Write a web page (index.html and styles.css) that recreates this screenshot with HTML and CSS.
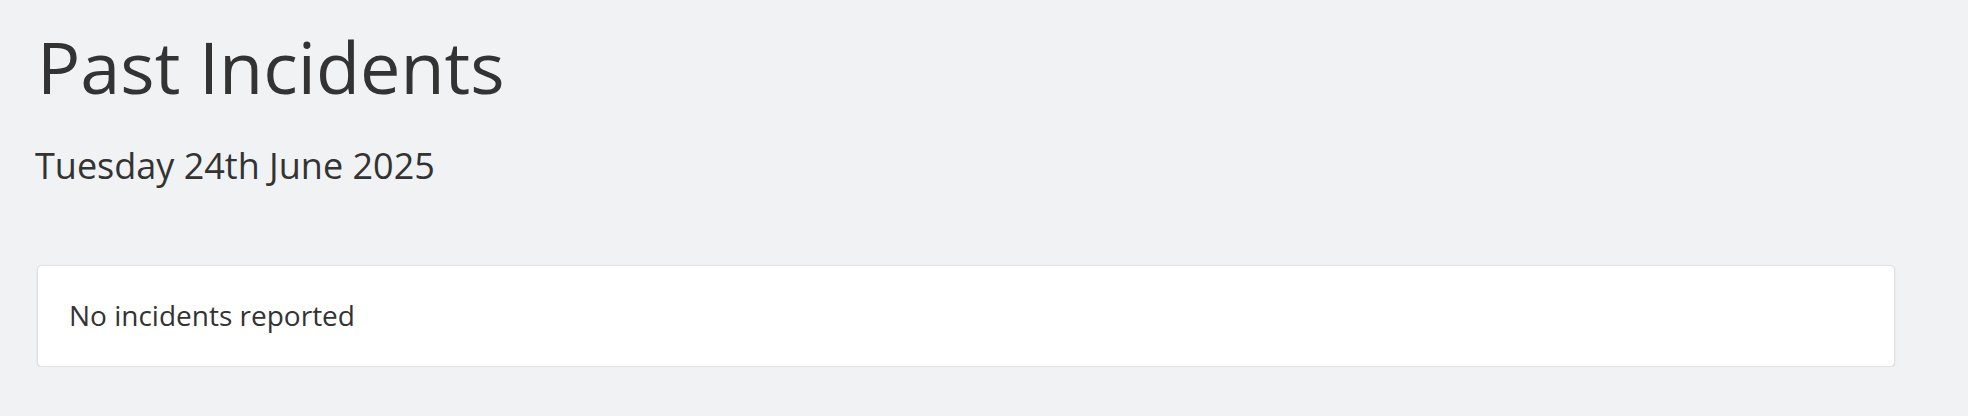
FILE: index.html
```html
<!DOCTYPE html>
<html>
<head>
    <title>Past Incidents</title>
    <link rel="stylesheet" href="styles.css">
</head>
<body>
    <div class="page">
        <h1 class="page-title">Past Incidents</h1>
        <div class="day">
            <h3 class="day-title">Tuesday 24th June 2025</h3>
            <div class="incident-card">
                <p class="no-incidents">No incidents reported</p>
            </div>
        </div>
    </div>
</body>
</html>
```

FILE: styles.css
```css
body {
    margin: 0;
    background-color: #f1f2f4;
    color: #333333;
    font-family: "Open Sans", "Liberation Sans", sans-serif;
}
.page {
    padding: 16px 73px 0 37px;
}
.page-title {
    margin: 0;
    font-size: 72px;
    font-weight: 400;
    line-height: 100px;
}
.day-title {
    margin: 27px 0 0 -2px;
    font-size: 36px;
    font-weight: 400;
    line-height: 46px;
}
.incident-card {
    margin-top: 76px;
    background: #ffffff;
    border: 1px solid #e0e1e3;
    border-radius: 5px;
    box-shadow: 0 1px 3px rgba(0, 0, 0, 0.08);
    padding: 0 31px;
    height: 100px;
    display: flex;
    align-items: center;
}
.no-incidents {
    margin: -2px 0 0 0;
    font-size: 28px;
}
```
